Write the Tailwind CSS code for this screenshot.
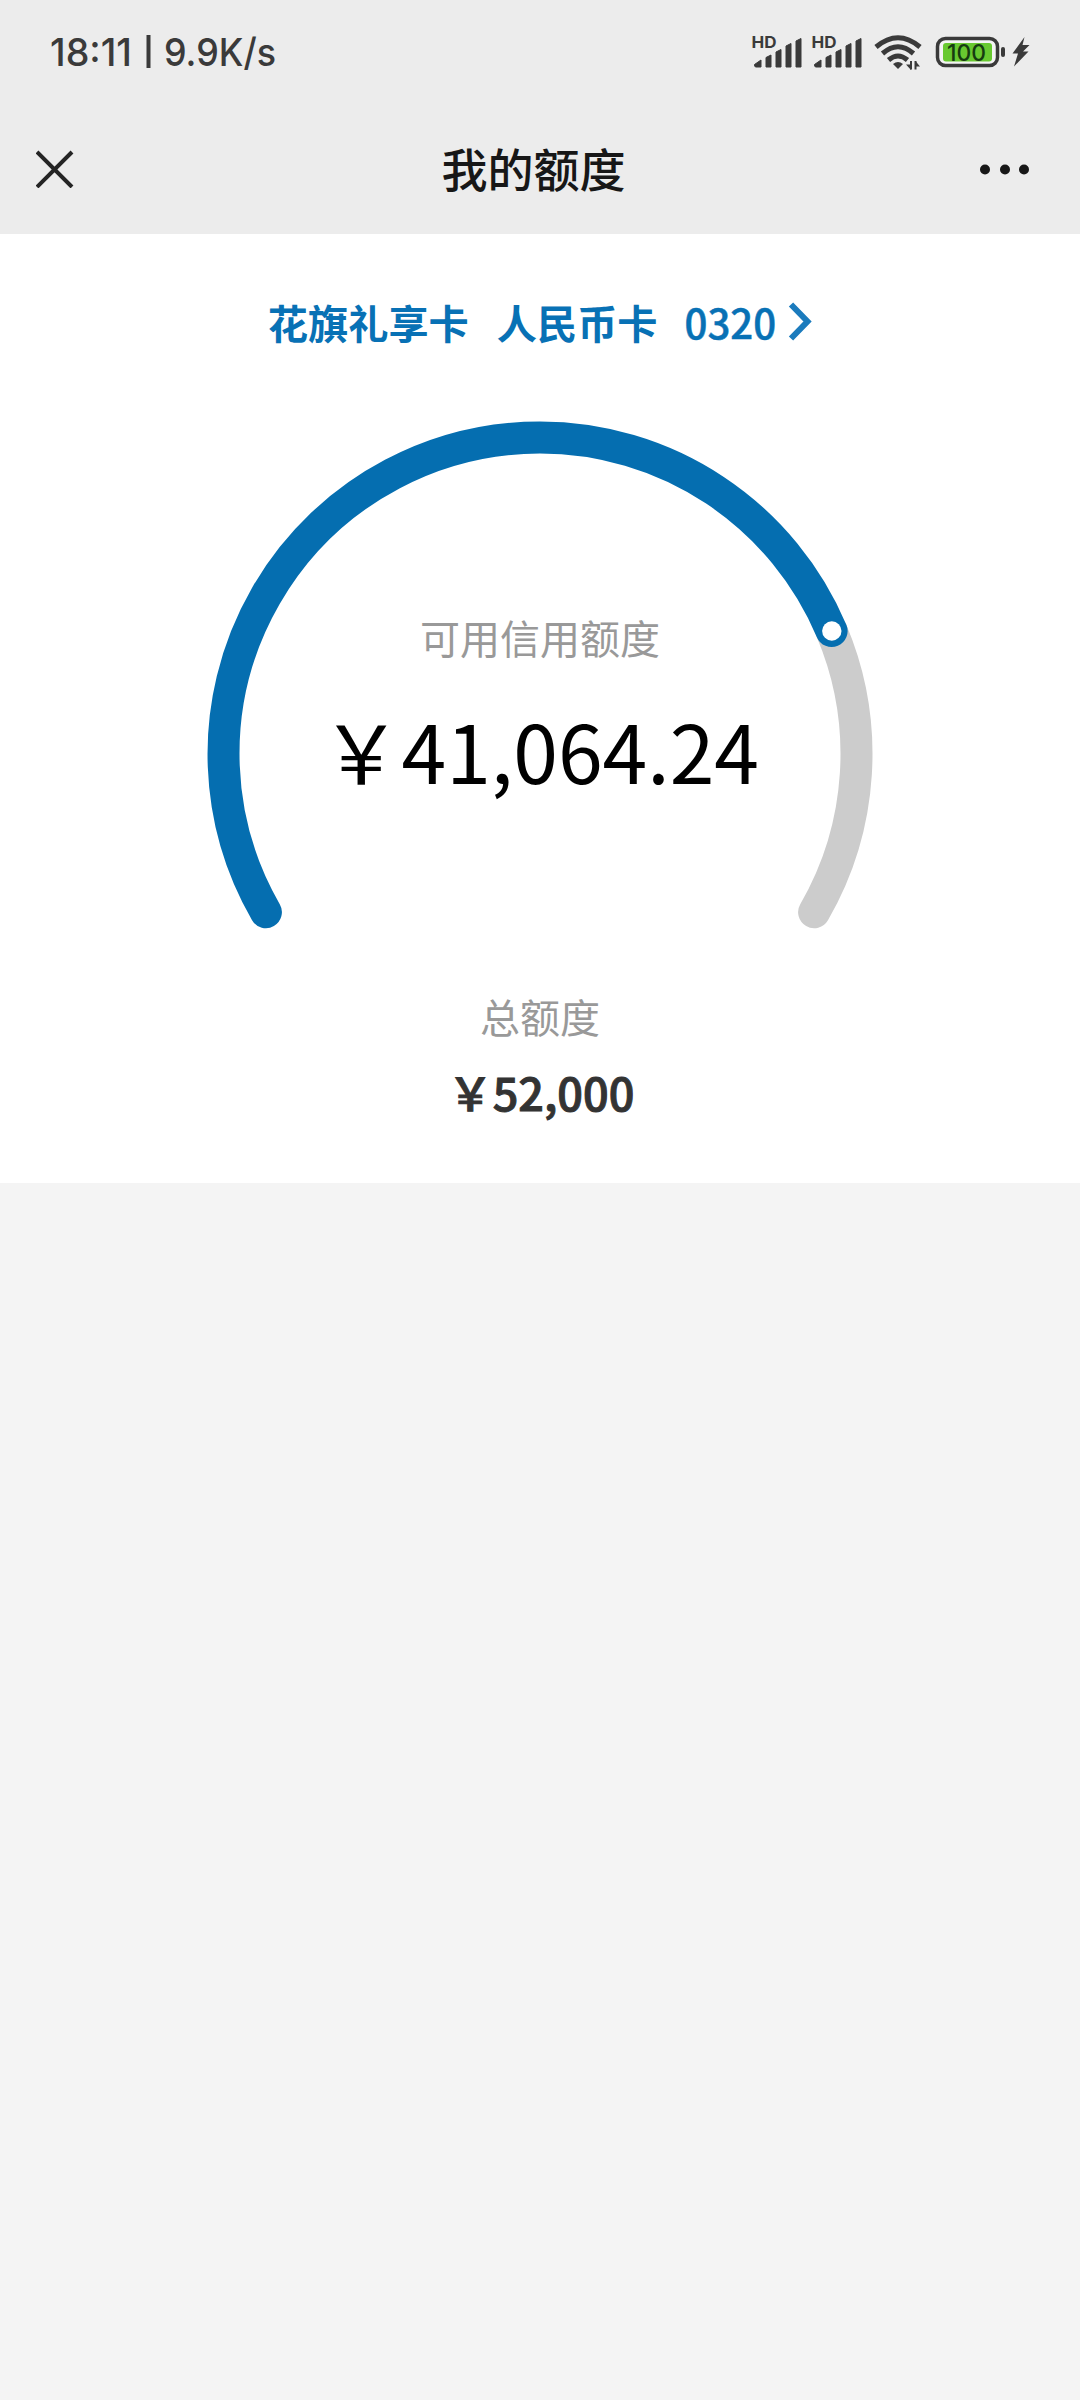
<!DOCTYPE html>
<html lang="zh-CN">

<head>
    <meta charset="UTF-8">
    <meta name="viewport" content="width=device-width, initial-scale=1.0">
    <title>我的额度</title>
    <script src="https://cdn.jsdelivr.net/npm/@tailwindcss/browser@4"></script>
</head>

<body class="min-h-screen bg-[#f4f4f4] font-['Noto_Sans_CJK_SC',sans-serif]">

    <header class="h-[234px] bg-[#ececec]">
        <!-- status bar -->
        <div class="flex h-[104px] items-center justify-between pl-[50px] pr-[50px] text-[#3a3a3a]">
            <svg class="h-[60px] w-[240px]" viewBox="0 -13 240 60" fill="currentColor" font-family="Inter, sans-serif" font-size="38.500" font-weight="500">
                <text x="0" y="31" textLength="82" lengthAdjust="spacingAndGlyphs">18:11</text>
                <rect x="96.500" y="0" width="4" height="33" />
                <text x="114" y="31" textLength="112" lengthAdjust="spacingAndGlyphs">9.9K/s</text>
            </svg>
            <svg class="h-[40px] w-[280px]" viewBox="750 32 280 40" fill="#3a3a3a">
                <g id="signal">
                    <text x="751.500" y="47.500" font-family="Inter, sans-serif" font-size="15.500" font-weight="700" textLength="25" lengthAdjust="spacingAndGlyphs">HD</text>
                    <path d="M754.500 64.500 L761 60 V67 H756 Q754.500 67 754.500 65Z" stroke="#3a3a3a" stroke-linejoin="round" />
                    <path d="M766 57.500 L771 55 V67 H766Z" stroke="#3a3a3a" stroke-linejoin="round" />
                    <path d="M776 52 L781 49.500 V67 H776Z" stroke="#3a3a3a" stroke-linejoin="round" />
                    <path d="M786 46 L791 43.500 V67 H786Z" stroke="#3a3a3a" stroke-linejoin="round" />
                    <path d="M796 41 L801 38.500 V67 H796Z" stroke="#3a3a3a" stroke-linejoin="round" />
                </g>
                <use href="#signal" x="60" />
                <!-- wifi -->
                <g fill="none" stroke="#3a3a3a" stroke-width="5">
                    <path d="M876 47 Q898 28.500 920 47" />
                    <path d="M882.500 53.500 Q898 40 913.500 53.500" />
                    <path d="M888.500 60 Q898 52 907.500 60" />
                </g>
                <path d="M893 64 Q898 60 903 64 L898 69Z" />
                <path d="M911 61 V69.500 M915.500 61 V69.500" fill="none" stroke="#3a3a3a" stroke-width="2" />
                <path d="M906 64.500 H911 V70Z M915.500 61 V66.500 H920Z" />
                <!-- battery -->
                <rect x="937.500" y="38.500" width="60" height="27" rx="8" fill="#f4f4f4" stroke="#3a3a3a" stroke-width="3.500" />
                <rect x="943" y="43" width="49" height="18.500" rx="3" fill="#68c930" />
                <text x="947" y="61" font-family="Inter, sans-serif" font-size="23.500" font-weight="500" textLength="39" lengthAdjust="spacingAndGlyphs" fill="#163c10">100</text>
                <rect x="1001" y="47" width="4" height="10" rx="2" />
                <path d="M1024.500 37 L1012.500 53.500 H1018 L1014 66.500 L1028.500 51.500 H1023 L1029.500 45 H1022.500Z" />
            </svg>
        </div>

        <!-- title bar -->
        <div class="flex h-[130px] items-center justify-between pl-9 pr-[41px]">
            <svg class="h-[38px] w-[60px]" viewBox="0 0 60 38" fill="none" stroke="#242424" stroke-width="4">
                <path d="M1 2 L36 37 M36 2 L1 37" />
            </svg>
            <h1 class="-mt-[5px] -ml-[8px] text-[46px] leading-[60px] font-medium text-[#171717]">我的额度</h1>
            <svg class="h-[38px] w-[60px]" viewBox="0 0 60 38" fill="#171717">
                <circle cx="6" cy="19.500" r="5" />
                <circle cx="26" cy="19.500" r="5" />
                <circle cx="45" cy="19.500" r="5" />
            </svg>
        </div>
    </header>

    <main class="flex h-[949px] flex-col items-center bg-white">
        <a class="mt-[58px] flex h-[60px] items-center text-[40.200px] leading-[60px] font-bold whitespace-nowrap text-[#0871b5]">
            <span>花旗礼享卡</span>
            <span class="ml-[28px]">人民币卡</span>
            <span class="ml-[27px] font-medium [-webkit-text-stroke:0.5px]">0320</span>
            <svg class="-mt-[3px] ml-[12px] h-[40px] w-[24px]" viewBox="0 0 24 40" fill="none" stroke="#1b7bbd" stroke-width="6">
                <path d="M3 3.500 L19.500 20.500 L3 37.500" />
            </svg>
        </a>

        <!-- gauge -->
        <div class="relative mt-[66px] h-[514px] w-[670px]">
            <svg class="h-full w-full" viewBox="205 418 670 514" fill="none" stroke-width="32" stroke-linecap="round">
                <path d="M831.600 631 A316.500 316.500 0 0 1 814.100 912.200" stroke="#cccccc" />
                <path d="M265.900 912.200 A316.500 316.500 0 0 1 540 437.500 A316.500 316.500 0 0 1 831.600 631" stroke="#056eb0" />
                <circle cx="831.800" cy="631" r="9.700" fill="#fff" />
            </svg>
            <div class="absolute inset-0 flex flex-col items-center whitespace-nowrap">
                <p class="mt-[189px] text-[40px] leading-[60px] text-[#999999]">可用信用额度</p>
                <p class="mt-[22px] text-[80.500px] leading-[120px] text-black">&#65509;41,064.24</p>
            </div>
        </div>

        <p class="mt-[54px] text-[40px] leading-[60px] text-[#999999]">总额度</p>
        <p class="mt-[11px] pl-[2px] text-[45px] leading-[70px] font-medium text-[#333333] [-webkit-text-stroke:1px]">&#65509;52,000</p>
    </main>

</body>

</html>
